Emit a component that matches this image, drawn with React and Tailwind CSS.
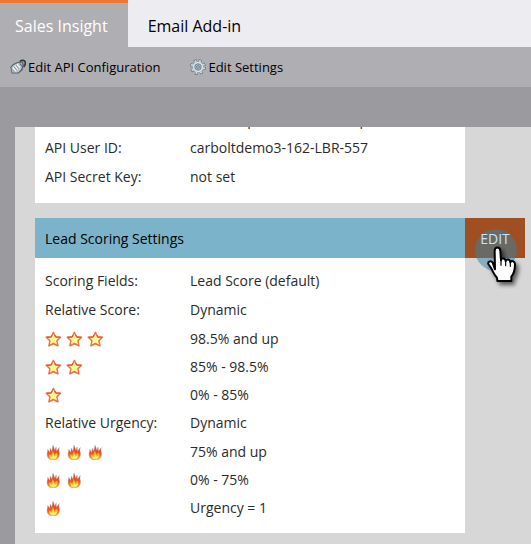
function Star() {
  return (
    <svg viewBox="0 0 17 17" className="h-[17px] w-[17px]" aria-hidden="true">
      <path d="M8.5 2.2 10.4 6.3 15.6 6.9 12 10.2 13.3 15.8 8.5 13.8 3.9 15.8 5 10.2 1.5 6.9 6.6 6.3Z" fill="#8a5a4a" opacity=".35" />
      <path d="M8.4 1.3 10.4 5.8 15.5 6.3 11.9 9.8 13 14.8 8.4 12.5 3.8 14.8 4.9 9.8 1.2 6.3 6.3 5.8Z" fill="#fff995" stroke="#e8704a" strokeWidth="1.4" strokeLinejoin="round" />
      <path d="M1.5 6.2H6L7 4M10 4 10.9 6.2H15.2" fill="none" stroke="#e4502a" strokeWidth="1" />
    </svg>
  );
}

function Flame() {
  return (
    <svg viewBox="0 0 17 17" className="h-[17px] w-[17px]" aria-hidden="true">
      <defs>
        <linearGradient id="fire" x1="0" y1="0" x2="0" y2="1">
          <stop offset="0" stopColor="#d93a22" />
          <stop offset=".55" stopColor="#f0501c" />
          <stop offset="1" stopColor="#f9a526" />
        </linearGradient>
      </defs>
      <path d="M5.2 15.5C2.8 14.3 1.8 12.3 2.1 9.8 2.2 8 3 7 2.7 5.3L4.7 8.4 5.3 4.2 6.9 7.2 8 1.2 9.9 6.3 11.1 3.1 11.5 7.2 14.3 3.6C13.3 6 14.5 8 14.5 10.3 14.4 13 13 14.7 11 15.5Z" fill="url(#fire)" stroke="#a89a96" strokeWidth=".4" />
      <path d="M5.8 15C4 14 3.8 12 4.4 9.9L6.2 11.6 7.9 6.7 9.4 10.8 11.9 8.4C12.2 10 12.9 11.2 12.5 12.7 12.1 14.2 11 14.9 9.9 15.2Z" fill="#fbb42d" />
      <path d="M6.2 14.8C5 14 4.9 12.9 5.2 12L7 13 8.3 9.9 9.3 12.4 11.8 11.3C12 13.4 10.8 14.8 9.4 15Z" fill="#fff36a" />
    </svg>
  );
}

function PlugIcon() {
  return (
    <svg viewBox="0 0 16 16" className="h-4 w-4" aria-hidden="true">
      <path d="M9.8 2.6C12 .6 14.8 1.2 15.3 3.2 15.7 5 14.8 6.5 13.6 7.8" fill="none" stroke="#333638" strokeWidth="1.7" />
      <path d="M.4 8.3 2.6 5.3 7.4 2.9 12.6 2.6 14.2 6.2 12.4 11.2 8.6 14.6 1.6 14.6Z" fill="#59646a" />
      <path d="M1.5 8.6 3.3 6.2 7.8 3.9 11.7 3.8 12.6 6.3 11 10.4 8 13.4 2.2 13.5Z" fill="#bcc7cc" />
      <path d="m2.8 8.3 3.4 4.1M4.8 6.7l3.3 4M7 5.2l2.8 3.6" stroke="#f4f8f9" strokeWidth="1.1" />
      <path d="m2.1 10.4 2.4 2.8M3.8 7.5l3.3 4M5.9 6l3.2 4" stroke="#77848a" strokeWidth=".7" />
      <path d="m9.7 4.3 2.9 3.5" stroke="#5c676c" strokeWidth="1.1" />
    </svg>
  );
}

function GearIcon() {
  return (
    <svg viewBox="0 0 16 16" className="h-4 w-4" aria-hidden="true">
      <circle cx="8" cy="8" r="6.3" fill="none" stroke="#5d6a74" strokeWidth="3" strokeDasharray="2.8 2.148" />
      <circle cx="8" cy="8" r="5.7" fill="#d5e0e8" stroke="#8493a0" strokeWidth=".8" />
      <circle cx="8" cy="8" r="6.2" fill="none" stroke="#cedae2" strokeWidth="2" strokeDasharray="1.9 2.97" strokeDashoffset="-.45" />
      <circle cx="8" cy="8" r="3.2" fill="#afc0cb" stroke="#71818d" strokeWidth="1" />
      <circle cx="8" cy="8" r="1.3" fill="#f3f6f8" stroke="#53616b" strokeWidth=".9" />
    </svg>
  );
}

function HandPointer() {
  return (
    <svg viewBox="105 81 168 186" className="pointer-events-none absolute top-[9px] left-[10px] z-10 h-[62px] w-14" aria-hidden="true">
      <defs>
        <filter id="shade" x="-40%" y="-40%" width="180%" height="180%">
          <feDropShadow dx="8" dy="9" stdDeviation="6" floodColor="#000" floodOpacity=".6" />
        </filter>
      </defs>
      <g filter="url(#shade)">
        <path d="M165 208 164 153C164 139 181 139 181 153L183 181C184 172 197 174 197 184 199 175 210 177 211 187 214 180 225 183 225 193 225 211 222 221 214 230L214 243H172L171 233C164 226 159 216 154 205L145 192C143 184 152 181 158 188Z" fill="#fff" stroke="#000" strokeWidth="6" strokeLinejoin="round" />
        <path d="M183 180V196M197 184V197M211 188V199" stroke="#000" strokeWidth="3.5" strokeLinecap="round" />
      </g>
    </svg>
  );
}

function Icons({ icon: Icon, count, label }) {
  return (
    <span role="img" aria-label={label} className="flex gap-1">
      {Array.from({ length: count }, (_, i) => <Icon key={i} />)}
    </span>
  );
}

function Row({ label, value }) {
  return (
    <div className="flex h-[29px] items-center">
      <dt className="w-[145px] shrink-0">{label}</dt>
      <dd>{value}</dd>
    </div>
  );
}

function LevelRow({ icon, count, label, value }) {
  return (
    <div className="flex h-7 items-center pt-0.5">
      <dt className="w-[145px] shrink-0"><Icons icon={icon} count={count} label={label} /></dt>
      <dd>{value}</dd>
    </div>
  );
}

export default function App() {
  return (
    <div className="flex h-screen flex-col overflow-hidden bg-[#9b9a9f] font-['Open_Sans','Noto_Sans',sans-serif] text-sm text-[#2b2b2b]">
      <nav className="flex h-[47px] shrink-0 bg-[#edecf1] text-base text-black">
        <a href="#insight" className="flex items-center border-t-3 border-[#ee7733] bg-[#afaeb3] pt-0.5 pr-5 pl-[15px] text-white">Sales Insight</a>
        <a href="#addin" className="flex items-center border-t-3 border-transparent px-5 pt-0.5">Email Add-in</a>
      </nav>
      <div className="flex h-10 shrink-0 items-center gap-[30px] bg-[#afaeb3] px-2.5 text-[13px] text-black">
        <button type="button" className="flex items-center gap-0.5"><PlugIcon />Edit API Configuration</button>
        <button type="button" className="flex items-center gap-0.5"><GearIcon />Edit Settings</button>
      </div>
      <main className="mt-10 ml-[15px] flex-1 overflow-hidden bg-[#d7d7d7] pr-1.5 pl-5">
        <section className="mr-[60px] bg-white px-2.5 pb-3">
          <dl>
            <div className="mb-[3px] flex h-[3px] items-end overflow-hidden">
              <dd className="ml-[145px]">carbolt.api@marketo-setup.com</dd>
            </div>
            <Row label="API User ID:" value="carboltdemo3-162-LBR-557" />
            <Row label="API Secret Key:" value="not set" />
          </dl>
        </section>
        <section className="mt-[15px]">
          <header className="flex h-10">
            <h2 className="flex flex-1 items-center bg-[#7bb3ca] px-2.5 pt-0.5 text-black">Lead Scoring Settings</h2>
            <button type="button" className="relative w-[60px] bg-[#a04f22] pt-0.5 text-[#c8e4fa]">
              <span className="absolute top-[11px] left-2.5 h-[42px] w-[42px] rounded-full bg-[#3284aa]/50" />
              <span className="relative">EDIT</span>
              <HandPointer />
            </button>
          </header>
          <dl className="mr-[60px] bg-white px-2.5 pt-2 pb-3">
            <Row label="Scoring Fields:" value="Lead Score (default)" />
            <Row label="Relative Score:" value="Dynamic" />
            <LevelRow icon={Star} count={3} label="Three stars" value="98.5% and up" />
            <LevelRow icon={Star} count={2} label="Two stars" value="85% - 98.5%" />
            <LevelRow icon={Star} count={1} label="One star" value="0% - 85%" />
            <Row label="Relative Urgency:" value="Dynamic" />
            <LevelRow icon={Flame} count={3} label="Three flames" value="75% and up" />
            <LevelRow icon={Flame} count={2} label="Two flames" value="0% - 75%" />
            <LevelRow icon={Flame} count={1} label="One flame" value="Urgency = 1" />
          </dl>
        </section>
      </main>
    </div>
  );
}
